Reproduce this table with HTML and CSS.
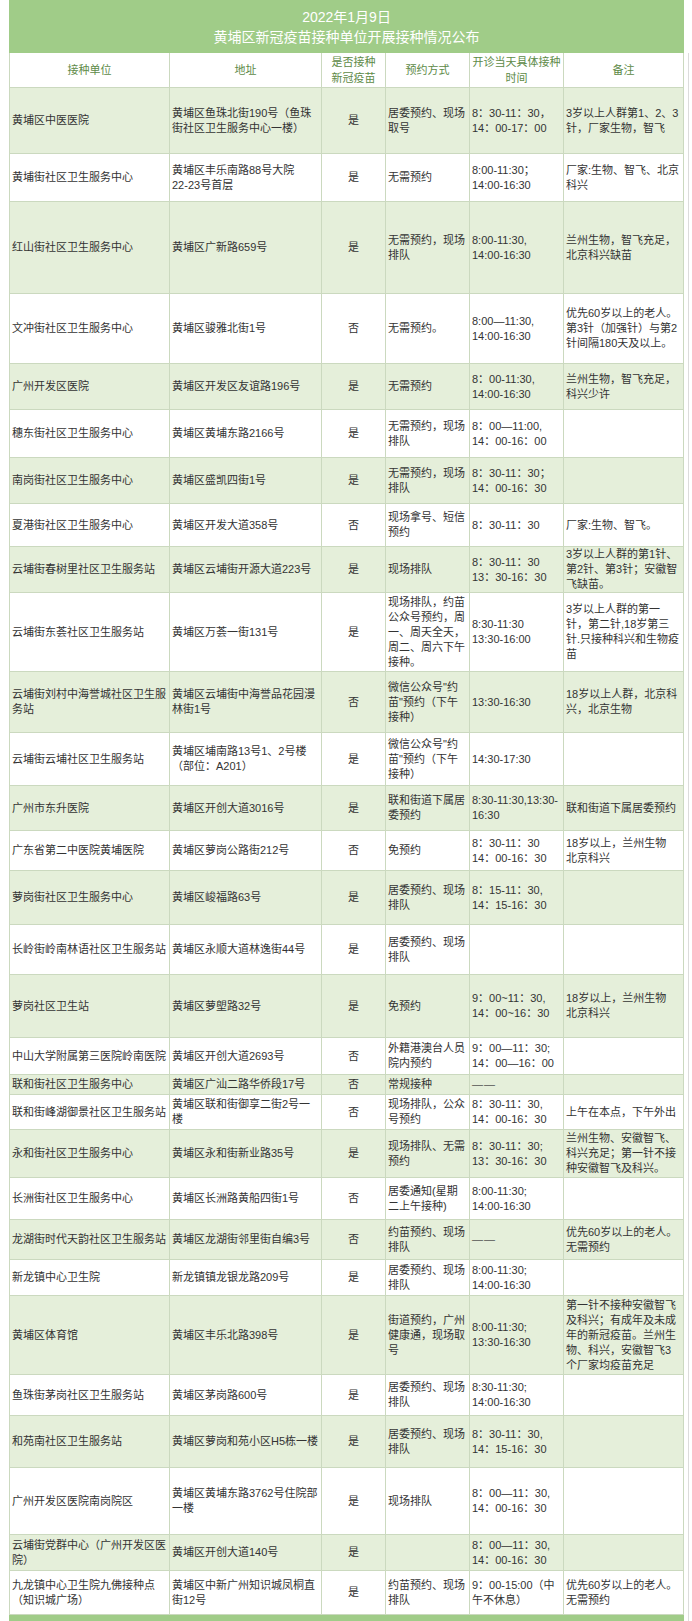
FILE: index.html
```html
<!DOCTYPE html>
<html lang="zh-CN">
<head>
<meta charset="utf-8">
<title>黄埔区新冠疫苗接种单位开展接种情况公布</title>
<link rel="stylesheet" href="styles.css">
</head>
<body>
<table class="sheet">
  <colgroup>
    <col class="c-unit"><col class="c-addr"><col class="c-yes"><col class="c-way"><col class="c-time"><col class="c-note"><col class="c-edge">
  </colgroup>
  <thead>
    <tr class="title-row">
      <th colspan="6" class="title">2022年1月9日<br>黄埔区新冠疫苗接种单位开展接种情况公布</th>
      <th class="edge top"></th>
    </tr>
    <tr class="head-row">
      <th>接种单位</th>
      <th>地址</th>
      <th>是否接种<br>新冠疫苗</th>
      <th>预约方式</th>
      <th>开诊当天具体接种<br>时间</th>
      <th>备注</th>
      <th class="edge"></th>
    </tr>
  </thead>
  <tbody>
    <tr class="g h66"><td>黄埔区中医医院</td><td>黄埔区鱼珠北街190号（鱼珠<br>街社区卫生服务中心一楼）</td><td class="yn">是</td><td>居委预约、现场<br>取号</td><td>8：30-11：30，<br>14：00-17：00</td><td>3岁以上人群第1、2、3<br>针，厂家生物，智飞</td><td class="edge"></td></tr>
    <tr class="w h48"><td>黄埔街社区卫生服务中心</td><td>黄埔区丰乐南路88号大院<br>22-23号首层</td><td class="yn">是</td><td>无需预约</td><td>8:00-11:30；<br>14:00-16:30</td><td>厂家:生物、智飞、北京<br>科兴</td><td class="edge"></td></tr>
    <tr class="g h92"><td>红山街社区卫生服务中心</td><td>黄埔区广新路659号</td><td class="yn">是</td><td>无需预约，现场<br>排队</td><td>8:00-11:30,<br>14:00-16:30</td><td>兰州生物，智飞充足，<br>北京科兴缺苗</td><td class="edge"></td></tr>
    <tr class="w h70"><td>文冲街社区卫生服务中心</td><td>黄埔区骏雅北街1号</td><td class="yn">否</td><td>无需预约。</td><td>8:00—11:30,<br>14:00-16:30</td><td>优先60岁以上的老人。<br>第3针（加强针）与第2<br>针间隔180天及以上。</td><td class="edge"></td></tr>
    <tr class="g h46"><td>广州开发区医院</td><td>黄埔区开发区友谊路196号</td><td class="yn">是</td><td>无需预约</td><td>8：00-11:30,<br>14:00-16:30</td><td>兰州生物，智飞充足，<br>科兴少许</td><td class="edge"></td></tr>
    <tr class="w h48"><td>穗东街社区卫生服务中心</td><td>黄埔区黄埔东路2166号</td><td class="yn">是</td><td>无需预约，现场<br>排队</td><td>8：00—11:00,<br>14：00-16：00</td><td></td><td class="edge"></td></tr>
    <tr class="g h46"><td>南岗街社区卫生服务中心</td><td>黄埔区盛凯四街1号</td><td class="yn">是</td><td>无需预约，现场<br>排队</td><td>8：30-11：30；<br>14：00-16：30</td><td></td><td class="edge"></td></tr>
    <tr class="w h43"><td>夏港街社区卫生服务中心</td><td>黄埔区开发大道358号</td><td class="yn">否</td><td>现场拿号、短信<br>预约</td><td>8：30-11：30</td><td>厂家:生物、智飞。</td><td class="edge"></td></tr>
    <tr class="g h44"><td>云埔街春树里社区卫生服务站</td><td>黄埔区云埔街开源大道223号</td><td class="yn">是</td><td>现场排队</td><td>8：30-11：30<br>13：30-16：30</td><td>3岁以上人群的第1针、<br>第2针、第3针；安徽智<br>飞缺苗。</td><td class="edge"></td></tr>
    <tr class="w h79"><td>云埔街东荟社区卫生服务站</td><td>黄埔区万荟一街131号</td><td class="yn">是</td><td>现场排队，约苗<br>公众号预约，周<br>一、周天全天，<br>周二、周六下午<br>接种。</td><td>8:30-11:30<br>13:30-16:00</td><td>3岁以上人群的第一<br>针，第二针,18岁第三<br>针.只接种科兴和生物疫<br>苗</td><td class="edge"></td></tr>
    <tr class="g h61"><td>云埔街刘村中海誉城社区卫生服<br>务站</td><td>黄埔区云埔街中海誉品花园漫<br>林街1号</td><td class="yn">否</td><td>微信公众号"约<br>苗"预约（下午<br>接种）</td><td>13:30-16:30</td><td>18岁以上人群，北京科<br>兴，北京生物</td><td class="edge"></td></tr>
    <tr class="w h53"><td>云埔街云埔社区卫生服务站</td><td>黄埔区埔南路13号1、2号楼<br>（部位：A201）</td><td class="yn">是</td><td>微信公众号"约<br>苗"预约（下午<br>接种）</td><td>14:30-17:30</td><td></td><td class="edge"></td></tr>
    <tr class="g h45"><td>广州市东升医院</td><td>黄埔区开创大道3016号</td><td class="yn">是</td><td>联和街道下属居<br>委预约</td><td>8:30-11:30,13:30-<br>16:30</td><td>联和街道下属居委预约</td><td class="edge"></td></tr>
    <tr class="w h40"><td>广东省第二中医院黄埔医院</td><td>黄埔区萝岗公路街212号</td><td class="yn">否</td><td>免预约</td><td>8：30-11：30<br>14：00-16：30</td><td>18岁以上，兰州生物<br>北京科兴</td><td class="edge"></td></tr>
    <tr class="g h54"><td>萝岗街社区卫生服务中心</td><td>黄埔区峻福路63号</td><td class="yn">是</td><td>居委预约、现场<br>排队</td><td>8：15-11：30,<br>14：15-16：30</td><td></td><td class="edge"></td></tr>
    <tr class="w h50"><td>长岭街岭南林语社区卫生服务站</td><td>黄埔区永顺大道林逸街44号</td><td class="yn">是</td><td>居委预约、现场<br>排队</td><td></td><td></td><td class="edge"></td></tr>
    <tr class="g h63"><td>萝岗社区卫生站</td><td>黄埔区萝塱路32号</td><td class="yn">是</td><td>免预约</td><td>9：00~11：30,<br>14：00~16：30</td><td>18岁以上，兰州生物<br>北京科兴</td><td class="edge"></td></tr>
    <tr class="w h37"><td>中山大学附属第三医院岭南医院</td><td>黄埔区开创大道2693号</td><td class="yn">否</td><td>外籍港澳台人员<br>院内预约</td><td>9：00—11：30;<br>14：00—16：00</td><td></td><td class="edge"></td></tr>
    <tr class="g h20"><td>联和街社区卫生服务中心</td><td>黄埔区广汕二路华侨段17号</td><td class="yn">否</td><td>常规接种</td><td><span class="dash">— —</span></td><td></td><td class="edge"></td></tr>
    <tr class="w h35"><td>联和街峰湖御景社区卫生服务站</td><td>黄埔区联和街御享二街2号一<br>楼</td><td class="yn">否</td><td>现场排队，公众<br>号预约</td><td>8：30-11：30,<br>14：00-16：30</td><td>上午在本点，下午外出</td><td class="edge"></td></tr>
    <tr class="g h48"><td>永和街社区卫生服务中心</td><td>黄埔区永和街新业路35号</td><td class="yn">是</td><td>现场排队、无需<br>预约</td><td>8：30-11：30;<br>13：30-16：30</td><td>兰州生物、安徽智飞、<br>科兴充足；第一针不接<br>种安徽智飞及科兴。</td><td class="edge"></td></tr>
    <tr class="w h42"><td>长洲街社区卫生服务中心</td><td>黄埔区长洲路黄船四街1号</td><td class="yn">否</td><td>居委通知(星期<br>二上午接种)</td><td>8:00-11:30;<br>14:00-16:30</td><td></td><td class="edge"></td></tr>
    <tr class="g h40"><td>龙湖街时代天韵社区卫生服务站</td><td>黄埔区龙湖街邻里街自编3号</td><td class="yn">否</td><td>约苗预约、现场<br>排队</td><td><span class="dash">— —</span></td><td>优先60岁以上的老人。<br>无需预约</td><td class="edge"></td></tr>
    <tr class="w h36"><td>新龙镇中心卫生院</td><td>新龙镇镇龙银龙路209号</td><td class="yn">是</td><td>居委预约、现场<br>排队</td><td>8:00-11:30;<br>14:00-16:30</td><td></td><td class="edge"></td></tr>
    <tr class="g h79"><td>黄埔区体育馆</td><td>黄埔区丰乐北路398号</td><td class="yn">是</td><td>街道预约，广州<br>健康通，现场取<br>号</td><td>8:00-11:30;<br>13:30-16:30</td><td>第一针不接种安徽智飞<br>及科兴；有成年及未成<br>年的新冠疫苗。兰州生<br>物、科兴，安徽智飞3<br>个厂家均疫苗充足</td><td class="edge"></td></tr>
    <tr class="w h41"><td>鱼珠街茅岗社区卫生服务站</td><td>黄埔区茅岗路600号</td><td class="yn">是</td><td>居委预约、现场<br>排队</td><td>8:30-11:30;<br>14:00-16:30</td><td></td><td class="edge"></td></tr>
    <tr class="g h52"><td>和苑南社区卫生服务站</td><td>黄埔区萝岗和苑小区H5栋一楼</td><td class="yn">是</td><td>居委预约、现场<br>排队</td><td>8：30-11：30,<br>14：15-16：30</td><td></td><td class="edge"></td></tr>
    <tr class="w h67"><td>广州开发区医院南岗院区</td><td>黄埔区黄埔东路3762号住院部<br>一楼</td><td class="yn">是</td><td>现场排队</td><td>8：00—11：30,<br>14：00-16：30</td><td></td><td class="edge"></td></tr>
    <tr class="g h36"><td>云埔街党群中心（广州开发区医<br>院）</td><td>黄埔区开创大道140号</td><td class="yn">是</td><td></td><td>8：00—11：30,<br>14：00-16：30</td><td></td><td class="edge"></td></tr>
    <tr class="w h44"><td>九龙镇中心卫生院九佛接种点<br>（知识城广场）</td><td>黄埔区中新广州知识城凤桐直<br>街12号</td><td class="yn">是</td><td>约苗预约、现场<br>排队</td><td>9：00-15:00（中<br>午不休息）</td><td>优先60岁以上的老人。<br>无需预约</td><td class="edge"></td></tr>
  </tbody>
  <tfoot>
    <tr class="foot-row"><td colspan="6" class="foot"></td><td class="edge"></td></tr>
  </tfoot>
</table>
</body>
</html>
```
FILE: styles.css
```css
html, body {
  margin: 0;
  padding: 0;
  background: #ffffff;
}

body {
  font-family: "Liberation Sans", "Noto Sans CJK SC", sans-serif;
  font-size: 11px;
  color: #333333;
}

.sheet {
  margin-left: 9px;
  border-collapse: collapse;
  table-layout: fixed;
  width: 679px;
}

.c-unit { width: 160px; }
.c-addr { width: 152px; }
.c-yes { width: 64px; }
.c-way { width: 84px; }
.c-time { width: 94px; }
.c-note { width: 120px; }
.c-edge { width: 5px; }

.sheet th,
.sheet td {
  border: 1px solid #cbd9bf;
  padding: 0 2px;
  line-height: 15px;
  vertical-align: middle;
  text-align: left;
  white-space: nowrap;
  overflow: visible;
  font-weight: normal;
}

.title-row { height: 52px; }

.sheet .title {
  background: #a0cc88;
  color: #ffffff;
  font-size: 14px;
  line-height: 20px;
  text-align: center;
  border-color: #a0cc88;
}

.head-row { height: 35px; }

.head-row th {
  background: #ffffff;
  color: #5d8a47;
  text-align: center;
  font-size: 11px;
  line-height: 16px;
}

.sheet .yn { text-align: center; }

.dash {
  letter-spacing: -1px;
  color: #555555;
}

.g td { background: #e5efda; }
.w td { background: #ffffff; }

.sheet .edge {
  background: #ffffff;
  border-top: none;
  border-bottom: none;
  border-right: 1px solid #dcdcdc;
  padding: 0;
}

.sheet .edge.top { border-right: none; }

.foot-row { height: 9px; }
.sheet .foot {
  background: #a0cc88;
  border-color: #a0cc88;
  padding: 0;
  line-height: 0;
}

.h20 { height: 20px; }
.h35 { height: 35px; }
.h36 { height: 36px; }
.h37 { height: 37px; }
.h40 { height: 40px; }
.h41 { height: 41px; }
.h42 { height: 42px; }
.h43 { height: 43px; }
.h44 { height: 44px; }
.h45 { height: 45px; }
.h46 { height: 46px; }
.h48 { height: 48px; }
.h50 { height: 50px; }
.h52 { height: 52px; }
.h53 { height: 53px; }
.h54 { height: 54px; }
.h61 { height: 61px; }
.h63 { height: 63px; }
.h66 { height: 66px; }
.h67 { height: 67px; }
.h70 { height: 70px; }
.h79 { height: 79px; }
.h92 { height: 92px; }
```
